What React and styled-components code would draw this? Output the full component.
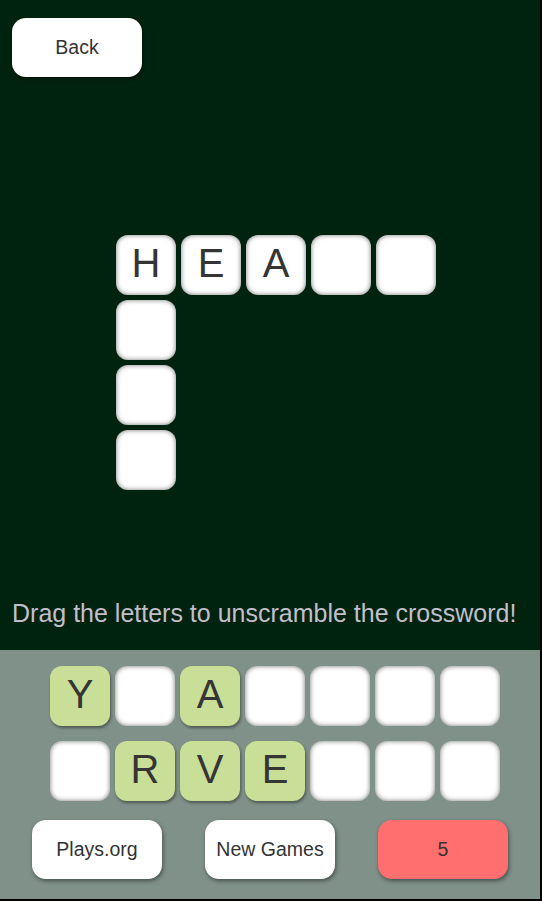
import React from "react";
import styled, { createGlobalStyle } from "styled-components";

const Global = createGlobalStyle`
  html, body { margin: 0; padding: 0; background: #000; }
  body { font-family: "Liberation Sans", Arial, sans-serif; }
`;

const Page = styled.div`
  width: 540px;
  height: 899px;
  display: flex;
  flex-direction: column;
  overflow: hidden;
`;

const Board = styled.div`
  background: #00230f;
  height: 650px;
  display: flex;
  flex-direction: column;
  box-sizing: border-box;
  padding: 18px 0 0 12px;
`;

const Button = styled.button`
  width: 130px;
  height: 59px;
  border: none;
  border-radius: 14px;
  background: ${(p) => p.$bg || "#ffffff"};
  color: #333;
  font-family: "Liberation Sans", Arial, sans-serif;
  font-size: 19.5px;
  box-shadow: 1px 2px 4px rgba(0, 0, 0, 0.45);
  padding: 0;
  cursor: pointer;
`;

const Cross = styled.div`
  margin: 158px 0 0 104px;
  display: grid;
  grid-template-columns: repeat(5, 60px);
  grid-auto-rows: 60px;
  gap: 5px;
`;

const Tile = styled.div`
  width: 60px;
  height: 60px;
  box-sizing: border-box;
  border-radius: 12px;
  background: ${(p) => (p.$green ? "#c9de97" : "#ffffff")};
  box-shadow: ${(p) =>
    p.$green
      ? "1px 2px 3px rgba(0,0,0,0.4)"
      : "inset 0 0 5px rgba(0,0,0,0.55)"};
  display: flex;
  align-items: center;
  justify-content: center;
  padding-bottom: 3px;
  font-family: "Liberation Sans", Arial, sans-serif;
  font-size: 40px;
  color: #353535;
  grid-column: ${(p) => p.$col || "auto"};
  grid-row: ${(p) => p.$row || "auto"};
`;

const Hint = styled.div`
  margin: auto 0 22px 0;
  color: #c3bfca;
  font-size: 25px;
  white-space: nowrap;
`;

const Tray = styled.div`
  background: #7f9188;
  flex: 1;
  box-sizing: border-box;
  padding: 16px 0 0 50px;
  display: flex;
  flex-direction: column;
`;

const TileRow = styled.div`
  display: flex;
  gap: 5px;
  margin-bottom: 15px;
`;

const Buttons = styled.div`
  display: flex;
  gap: 43px;
  margin: 4px 0 0 -18px;
`;

const row1 = ["Y", "", "A", "", "", "", ""];
const row2 = ["", "R", "V", "E", "", "", ""];

export default function App() {
  return (
    <>
      <Global />
      <Page>
        <Board>
          <Button>Back</Button>
          <Cross>
            <Tile $col={1} $row={1}>H</Tile>
            <Tile $col={2} $row={1}>E</Tile>
            <Tile $col={3} $row={1}>A</Tile>
            <Tile $col={4} $row={1} />
            <Tile $col={5} $row={1} />
            <Tile $col={1} $row={2} />
            <Tile $col={1} $row={3} />
            <Tile $col={1} $row={4} />
          </Cross>
          <Hint>Drag the letters to unscramble the crossword!</Hint>
        </Board>
        <Tray>
          <TileRow>
            {row1.map((l, i) => (
              <Tile key={i} $green={!!l}>{l}</Tile>
            ))}
          </TileRow>
          <TileRow>
            {row2.map((l, i) => (
              <Tile key={i} $green={!!l}>{l}</Tile>
            ))}
          </TileRow>
          <Buttons>
            <Button>Plays.org</Button>
            <Button>New Games</Button>
            <Button $bg="#ff6f6f">5</Button>
          </Buttons>
        </Tray>
      </Page>
    </>
  );
}
